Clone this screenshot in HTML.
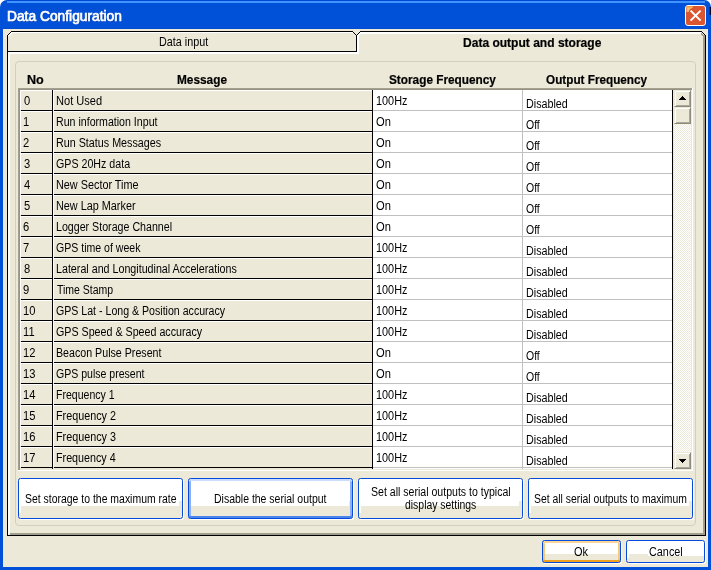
<!DOCTYPE html>
<html lang="en"><head><meta charset="utf-8"><title>Data Configuration</title>
<style>
html,body{margin:0;padding:0}
body{width:711px;height:570px;background:#ECE9D8;position:relative;overflow:hidden;font-family:"Liberation Sans",sans-serif}
#w{position:absolute;left:0;top:0;width:711px;height:570px;background:#ECE9D8;overflow:hidden;will-change:transform}
#w div,#w svg,#w span{position:absolute;display:block}
.t{white-space:nowrap;transform-origin:0 0}
.b{-webkit-text-stroke:0.2px #000}
</style></head>
<body>
<div id="w">
<div style="left:0px;top:0px;width:711px;height:10px;background:#fff;"></div>
<div style="left:0;top:0;width:711px;height:29px;background:linear-gradient(to bottom,#0048D2 0,#0048D2 1px,#0050D8 1px,#0050D8 28px,#004CD2 28px);border-radius:7px 7px 0 0"></div>
<div style="left:7px;top:1px;width:698px;height:2px;background:#3F95FF;"></div>
<div style="left:0px;top:29px;width:3px;height:541px;background:#0050D8;"></div>
<div style="left:708px;top:29px;width:3px;height:541px;background:#0050D8;"></div>
<div style="left:0px;top:567px;width:711px;height:3px;background:#0050D8;"></div>
<div style="left:710px;top:7px;width:1px;height:8px;background:#05051A;"></div>
<div style="left:709px;top:7px;width:1px;height:8px;background:#033A9E;"></div>
<div style="left:685px;top:5px;width:21px;height:21px;box-sizing:border-box;border:1px solid #fff;border-radius:3px;background:#DB5530"></div>
<svg style="left:685px;top:5px" width="21" height="21" viewBox="0 0 21 21"><path d="M5.6 5.6 L15.6 15.6 M15.6 5.6 L5.6 15.6" stroke="#fff" stroke-width="2" stroke-linecap="butt" fill="none"/><path d="M1.5 1.5 h5.5 l1 1 l-3 1.5 l-1.5 3 l-2 0z" fill="#F6BE76"/><path d="M1.5 2 h6.5" stroke="#F2A43A" stroke-width="1" fill="none"/></svg>
<svg style="left:0;top:0" width="711" height="570" viewBox="0 0 711 570" shape-rendering="crispEdges">
<g fill="none" stroke-width="1">
<!-- white highlights -->
<path d="M11 32.5 H353" stroke="#fff"/>
<path d="M8.5 36 L12 32.5" stroke="#fff"/>
<path d="M360 33 H701" stroke="#fff" stroke-width="2"/>
<path d="M358 35 V54" stroke="#fff" stroke-width="2"/>
<path d="M358.5 35 L361 32.5" stroke="#fff"/>
<path d="M8 53 H359" stroke="#fff" stroke-width="2"/>
<path d="M9 52 V534" stroke="#fff" stroke-width="2"/>
<!-- gray shadows -->
<path d="M704 35 V534" stroke="#A09D8D" stroke-width="2"/>
<path d="M701 33 h1 v1 h1 v1 h1 v1 h-2 v-1 h-1 z" fill="#A09D8D" stroke="none"/>
<path d="M10 534 H705" stroke="#A09D8D" stroke-width="2"/>
<!-- black outline -->
<path d="M7.5 535.5 V35.5 L11.5 31.5 H352.5 L356.5 35.5 L360.5 31.5 H701.5 L705.5 35.5 V535.5 Z" stroke="#000"/>
<path d="M7.5 51.5 H356.5 V35" stroke="#000"/>
</g>
</svg>
<div style="left:15px;top:61px;width:681px;height:465px;box-sizing:border-box;border:1px solid #D0D0BF;border-radius:4px"></div>
<div style="left:18px;top:88px;width:675px;height:383px;background:#ECE9D8;"></div>
<div style="left:18px;top:88px;width:675px;height:1px;background:#A3A090;"></div>
<div style="left:18px;top:88px;width:1px;height:383px;background:#A3A090;"></div>
<div style="left:19px;top:89px;width:673px;height:1px;background:#969382;"></div>
<div style="left:19px;top:89px;width:1px;height:381px;background:#969382;"></div>
<div style="left:692px;top:88px;width:1px;height:383px;background:#FFFFFF;"></div>
<div style="left:18px;top:470px;width:675px;height:1px;background:#FFFFFF;"></div>
<div style="left:373px;top:90px;width:299px;height:379px;background:#fff;"></div>
<div style="left:20px;top:90px;width:32px;height:1px;background:#fff;"></div>
<div style="left:20px;top:90px;width:1px;height:20px;background:#fff;"></div>
<div style="left:53px;top:90px;width:319px;height:1px;background:#fff;"></div>
<div style="left:53px;top:90px;width:1px;height:20px;background:#fff;"></div>
<div style="left:21px;top:110px;width:32px;height:1px;background:#000;"></div>
<div style="left:54px;top:110px;width:319px;height:1px;background:#000;"></div>
<div style="left:373px;top:110px;width:299px;height:1px;background:#C0C0C0;"></div>
<div style="left:20px;top:111px;width:32px;height:1px;background:#fff;"></div>
<div style="left:20px;top:111px;width:1px;height:20px;background:#fff;"></div>
<div style="left:53px;top:111px;width:319px;height:1px;background:#fff;"></div>
<div style="left:53px;top:111px;width:1px;height:20px;background:#fff;"></div>
<div style="left:21px;top:131px;width:32px;height:1px;background:#000;"></div>
<div style="left:54px;top:131px;width:319px;height:1px;background:#000;"></div>
<div style="left:373px;top:131px;width:299px;height:1px;background:#C0C0C0;"></div>
<div style="left:20px;top:132px;width:32px;height:1px;background:#fff;"></div>
<div style="left:20px;top:132px;width:1px;height:20px;background:#fff;"></div>
<div style="left:53px;top:132px;width:319px;height:1px;background:#fff;"></div>
<div style="left:53px;top:132px;width:1px;height:20px;background:#fff;"></div>
<div style="left:21px;top:152px;width:32px;height:1px;background:#000;"></div>
<div style="left:54px;top:152px;width:319px;height:1px;background:#000;"></div>
<div style="left:373px;top:152px;width:299px;height:1px;background:#C0C0C0;"></div>
<div style="left:20px;top:153px;width:32px;height:1px;background:#fff;"></div>
<div style="left:20px;top:153px;width:1px;height:20px;background:#fff;"></div>
<div style="left:53px;top:153px;width:319px;height:1px;background:#fff;"></div>
<div style="left:53px;top:153px;width:1px;height:20px;background:#fff;"></div>
<div style="left:21px;top:173px;width:32px;height:1px;background:#000;"></div>
<div style="left:54px;top:173px;width:319px;height:1px;background:#000;"></div>
<div style="left:373px;top:173px;width:299px;height:1px;background:#C0C0C0;"></div>
<div style="left:20px;top:174px;width:32px;height:1px;background:#fff;"></div>
<div style="left:20px;top:174px;width:1px;height:20px;background:#fff;"></div>
<div style="left:53px;top:174px;width:319px;height:1px;background:#fff;"></div>
<div style="left:53px;top:174px;width:1px;height:20px;background:#fff;"></div>
<div style="left:21px;top:194px;width:32px;height:1px;background:#000;"></div>
<div style="left:54px;top:194px;width:319px;height:1px;background:#000;"></div>
<div style="left:373px;top:194px;width:299px;height:1px;background:#C0C0C0;"></div>
<div style="left:20px;top:195px;width:32px;height:1px;background:#fff;"></div>
<div style="left:20px;top:195px;width:1px;height:20px;background:#fff;"></div>
<div style="left:53px;top:195px;width:319px;height:1px;background:#fff;"></div>
<div style="left:53px;top:195px;width:1px;height:20px;background:#fff;"></div>
<div style="left:21px;top:215px;width:32px;height:1px;background:#000;"></div>
<div style="left:54px;top:215px;width:319px;height:1px;background:#000;"></div>
<div style="left:373px;top:215px;width:299px;height:1px;background:#C0C0C0;"></div>
<div style="left:20px;top:216px;width:32px;height:1px;background:#fff;"></div>
<div style="left:20px;top:216px;width:1px;height:20px;background:#fff;"></div>
<div style="left:53px;top:216px;width:319px;height:1px;background:#fff;"></div>
<div style="left:53px;top:216px;width:1px;height:20px;background:#fff;"></div>
<div style="left:21px;top:236px;width:32px;height:1px;background:#000;"></div>
<div style="left:54px;top:236px;width:319px;height:1px;background:#000;"></div>
<div style="left:373px;top:236px;width:299px;height:1px;background:#C0C0C0;"></div>
<div style="left:20px;top:237px;width:32px;height:1px;background:#fff;"></div>
<div style="left:20px;top:237px;width:1px;height:20px;background:#fff;"></div>
<div style="left:53px;top:237px;width:319px;height:1px;background:#fff;"></div>
<div style="left:53px;top:237px;width:1px;height:20px;background:#fff;"></div>
<div style="left:21px;top:257px;width:32px;height:1px;background:#000;"></div>
<div style="left:54px;top:257px;width:319px;height:1px;background:#000;"></div>
<div style="left:373px;top:257px;width:299px;height:1px;background:#C0C0C0;"></div>
<div style="left:20px;top:258px;width:32px;height:1px;background:#fff;"></div>
<div style="left:20px;top:258px;width:1px;height:20px;background:#fff;"></div>
<div style="left:53px;top:258px;width:319px;height:1px;background:#fff;"></div>
<div style="left:53px;top:258px;width:1px;height:20px;background:#fff;"></div>
<div style="left:21px;top:278px;width:32px;height:1px;background:#000;"></div>
<div style="left:54px;top:278px;width:319px;height:1px;background:#000;"></div>
<div style="left:373px;top:278px;width:299px;height:1px;background:#C0C0C0;"></div>
<div style="left:20px;top:279px;width:32px;height:1px;background:#fff;"></div>
<div style="left:20px;top:279px;width:1px;height:20px;background:#fff;"></div>
<div style="left:53px;top:279px;width:319px;height:1px;background:#fff;"></div>
<div style="left:53px;top:279px;width:1px;height:20px;background:#fff;"></div>
<div style="left:21px;top:299px;width:32px;height:1px;background:#000;"></div>
<div style="left:54px;top:299px;width:319px;height:1px;background:#000;"></div>
<div style="left:373px;top:299px;width:299px;height:1px;background:#C0C0C0;"></div>
<div style="left:20px;top:300px;width:32px;height:1px;background:#fff;"></div>
<div style="left:20px;top:300px;width:1px;height:20px;background:#fff;"></div>
<div style="left:53px;top:300px;width:319px;height:1px;background:#fff;"></div>
<div style="left:53px;top:300px;width:1px;height:20px;background:#fff;"></div>
<div style="left:21px;top:320px;width:32px;height:1px;background:#000;"></div>
<div style="left:54px;top:320px;width:319px;height:1px;background:#000;"></div>
<div style="left:373px;top:320px;width:299px;height:1px;background:#C0C0C0;"></div>
<div style="left:20px;top:321px;width:32px;height:1px;background:#fff;"></div>
<div style="left:20px;top:321px;width:1px;height:20px;background:#fff;"></div>
<div style="left:53px;top:321px;width:319px;height:1px;background:#fff;"></div>
<div style="left:53px;top:321px;width:1px;height:20px;background:#fff;"></div>
<div style="left:21px;top:341px;width:32px;height:1px;background:#000;"></div>
<div style="left:54px;top:341px;width:319px;height:1px;background:#000;"></div>
<div style="left:373px;top:341px;width:299px;height:1px;background:#C0C0C0;"></div>
<div style="left:20px;top:342px;width:32px;height:1px;background:#fff;"></div>
<div style="left:20px;top:342px;width:1px;height:20px;background:#fff;"></div>
<div style="left:53px;top:342px;width:319px;height:1px;background:#fff;"></div>
<div style="left:53px;top:342px;width:1px;height:20px;background:#fff;"></div>
<div style="left:21px;top:362px;width:32px;height:1px;background:#000;"></div>
<div style="left:54px;top:362px;width:319px;height:1px;background:#000;"></div>
<div style="left:373px;top:362px;width:299px;height:1px;background:#C0C0C0;"></div>
<div style="left:20px;top:363px;width:32px;height:1px;background:#fff;"></div>
<div style="left:20px;top:363px;width:1px;height:20px;background:#fff;"></div>
<div style="left:53px;top:363px;width:319px;height:1px;background:#fff;"></div>
<div style="left:53px;top:363px;width:1px;height:20px;background:#fff;"></div>
<div style="left:21px;top:383px;width:32px;height:1px;background:#000;"></div>
<div style="left:54px;top:383px;width:319px;height:1px;background:#000;"></div>
<div style="left:373px;top:383px;width:299px;height:1px;background:#C0C0C0;"></div>
<div style="left:20px;top:384px;width:32px;height:1px;background:#fff;"></div>
<div style="left:20px;top:384px;width:1px;height:20px;background:#fff;"></div>
<div style="left:53px;top:384px;width:319px;height:1px;background:#fff;"></div>
<div style="left:53px;top:384px;width:1px;height:20px;background:#fff;"></div>
<div style="left:21px;top:404px;width:32px;height:1px;background:#000;"></div>
<div style="left:54px;top:404px;width:319px;height:1px;background:#000;"></div>
<div style="left:373px;top:404px;width:299px;height:1px;background:#C0C0C0;"></div>
<div style="left:20px;top:405px;width:32px;height:1px;background:#fff;"></div>
<div style="left:20px;top:405px;width:1px;height:20px;background:#fff;"></div>
<div style="left:53px;top:405px;width:319px;height:1px;background:#fff;"></div>
<div style="left:53px;top:405px;width:1px;height:20px;background:#fff;"></div>
<div style="left:21px;top:425px;width:32px;height:1px;background:#000;"></div>
<div style="left:54px;top:425px;width:319px;height:1px;background:#000;"></div>
<div style="left:373px;top:425px;width:299px;height:1px;background:#C0C0C0;"></div>
<div style="left:20px;top:426px;width:32px;height:1px;background:#fff;"></div>
<div style="left:20px;top:426px;width:1px;height:20px;background:#fff;"></div>
<div style="left:53px;top:426px;width:319px;height:1px;background:#fff;"></div>
<div style="left:53px;top:426px;width:1px;height:20px;background:#fff;"></div>
<div style="left:21px;top:446px;width:32px;height:1px;background:#000;"></div>
<div style="left:54px;top:446px;width:319px;height:1px;background:#000;"></div>
<div style="left:373px;top:446px;width:299px;height:1px;background:#C0C0C0;"></div>
<div style="left:20px;top:447px;width:32px;height:1px;background:#fff;"></div>
<div style="left:20px;top:447px;width:1px;height:20px;background:#fff;"></div>
<div style="left:53px;top:447px;width:319px;height:1px;background:#fff;"></div>
<div style="left:53px;top:447px;width:1px;height:20px;background:#fff;"></div>
<div style="left:21px;top:467px;width:32px;height:1px;background:#000;"></div>
<div style="left:54px;top:467px;width:319px;height:1px;background:#000;"></div>
<div style="left:373px;top:467px;width:299px;height:1px;background:#C0C0C0;"></div>
<div style="left:52px;top:90px;width:1px;height:379px;background:#000;"></div>
<div style="left:372px;top:90px;width:1px;height:379px;background:#000;"></div>
<div style="left:522px;top:90px;width:1px;height:379px;background:#C0C0C0;"></div>
<div style="left:672px;top:90px;width:1px;height:379px;background:#000;"></div>
<div style="left:674px;top:90px;width:17px;height:379px;background-color:#F5F4EB;background-image:repeating-conic-gradient(#fff 0% 25%, #ECE9D8 0% 50%);background-size:2px 2px"></div>
<div style="left:674px;top:90px;width:17px;height:17px;box-sizing:border-box;background:#ECE9D8;border:1px solid;border-color:#ECE9D8 #8E8B7C #8E8B7C #ECE9D8;box-shadow:inset 1px 1px 0 #fff, inset -1px -1px 0 #ACA899"></div>
<div style="left:674px;top:107px;width:17px;height:17px;box-sizing:border-box;background:#ECE9D8;border:1px solid;border-color:#ECE9D8 #8E8B7C #8E8B7C #ECE9D8;box-shadow:inset 1px 1px 0 #fff, inset -1px -1px 0 #ACA899"></div>
<div style="left:674px;top:452px;width:17px;height:17px;box-sizing:border-box;background:#ECE9D8;border:1px solid;border-color:#ECE9D8 #8E8B7C #8E8B7C #ECE9D8;box-shadow:inset 1px 1px 0 #fff, inset -1px -1px 0 #ACA899"></div>
<svg style="left:674px;top:90px" width="17" height="379" shape-rendering="crispEdges"><path d="M4.5 10 L8.5 6 L12.5 10 Z" fill="#000"/><path d="M4.5 369 L8.5 373 L12.5 369 Z" fill="#000"/></svg>
<div style="left:18px;top:478px;width:165px;height:41px;box-sizing:border-box;border:1px solid #064ADC;border-radius:2.5px;background:linear-gradient(to bottom,#fff 0,#fff 34px,transparent 34px) 0 0/2px 100% no-repeat,linear-gradient(to bottom,transparent 22px,#ECE9D8 22px) 100% 0/3px 100% no-repeat,linear-gradient(to bottom,#fff 0,#fff 27px,#ECE9D8 27px,#ECE9D8 100%);box-shadow:1px 1px 0 #fff;"></div>
<div style="left:188px;top:478px;width:165px;height:41px;box-sizing:border-box;border:1px solid #064ADC;border-radius:2.5px;background:linear-gradient(to bottom,#fff 0,#fff 34px,transparent 34px) 0 0/2px 100% no-repeat,linear-gradient(to bottom,transparent 22px,#ECE9D8 22px) 100% 0/3px 100% no-repeat,linear-gradient(to bottom,#fff 0,#fff 27px,#ECE9D8 27px,#ECE9D8 100%);box-shadow:inset 0 2px 0 #CBDDFD, inset 0 -2px 0 #4B84EC, inset 2px 0 0 #8DB1F4, inset -2px 0 0 #8DB1F4, 1px 1px 0 #fff;"></div>
<div style="left:358px;top:478px;width:165px;height:41px;box-sizing:border-box;border:1px solid #064ADC;border-radius:2.5px;background:linear-gradient(to bottom,#fff 0,#fff 34px,transparent 34px) 0 0/2px 100% no-repeat,linear-gradient(to bottom,transparent 22px,#ECE9D8 22px) 100% 0/3px 100% no-repeat,linear-gradient(to bottom,#fff 0,#fff 27px,#ECE9D8 27px,#ECE9D8 100%);box-shadow:1px 1px 0 #fff;"></div>
<div style="left:528px;top:478px;width:165px;height:41px;box-sizing:border-box;border:1px solid #064ADC;border-radius:2.5px;background:linear-gradient(to bottom,#fff 0,#fff 34px,transparent 34px) 0 0/2px 100% no-repeat,linear-gradient(to bottom,transparent 22px,#ECE9D8 22px) 100% 0/3px 100% no-repeat,linear-gradient(to bottom,#fff 0,#fff 27px,#ECE9D8 27px,#ECE9D8 100%);box-shadow:1px 1px 0 #fff;"></div>
<div style="left:542px;top:540px;width:79px;height:23px;box-sizing:border-box;border:1px solid #064ADC;border-radius:2.5px;background:linear-gradient(to bottom,#fff 0,#fff 15px,transparent 15px) 0 0/2px 100% no-repeat,linear-gradient(to bottom,transparent 13px,#ECE9D8 13px) 100% 0/3px 100% no-repeat,linear-gradient(to bottom,#fff 0,#fff 13px,#ECE9D8 13px,#ECE9D8 100%);box-shadow:inset 0 2px 0 #FBD69A, inset 0 -2px 0 #F0A020, inset 2px 0 0 #F7C878, inset -2px 0 0 #F7C878, 1px 1px 0 #fff;"></div>
<div style="left:626px;top:540px;width:79px;height:23px;box-sizing:border-box;border:1px solid #064ADC;border-radius:2.5px;background:linear-gradient(to bottom,#fff 0,#fff 17px,transparent 17px) 0 0/2px 100% no-repeat,linear-gradient(to bottom,transparent 15px,#ECE9D8 15px) 100% 0/3px 100% no-repeat,linear-gradient(to bottom,#fff 0,#fff 15px,#ECE9D8 15px,#ECE9D8 100%);box-shadow:1px 1px 0 #fff;"></div>
<div style="left:629px;top:554px;width:19px;height:2px;background:#ECE9D8;"></div>
<span class="t" style="left:159.10px;top:36.00px;font-size:12px;line-height:12px;font-weight:normal;color:#000;transform:scaleX(0.8988);">Data input</span>
<span class="t b" style="left:462.65px;top:37.00px;font-size:12px;line-height:12px;font-weight:bold;color:#000;transform:scaleX(1.0024);">Data output and storage</span>
<span class="t b" style="left:27.21px;top:74.00px;font-size:12px;line-height:12px;font-weight:bold;color:#000;transform:scaleX(1.0508);">No</span>
<span class="t b" style="left:177.26px;top:74.00px;font-size:12px;line-height:12px;font-weight:bold;color:#000;transform:scaleX(0.9859);">Message</span>
<span class="t b" style="left:389.23px;top:74.00px;font-size:12px;line-height:12px;font-weight:bold;color:#000;transform:scaleX(0.9838);">Storage Frequency</span>
<span class="t b" style="left:545.61px;top:74.00px;font-size:12px;line-height:12px;font-weight:bold;color:#000;transform:scaleX(0.9781);">Output Frequency</span>
<span class="t" style="left:23.54px;top:95.00px;font-size:12px;line-height:12px;font-weight:normal;color:#000;transform:scaleX(0.9300);">0</span>
<span class="t" style="left:56.08px;top:95.00px;font-size:12px;line-height:12px;font-weight:normal;color:#000;transform:scaleX(0.9223);">Not Used</span>
<span class="t" style="left:376.31px;top:95.00px;font-size:12px;line-height:12px;font-weight:normal;color:#000;transform:scaleX(0.9053);">100Hz</span>
<span class="t" style="left:526.00px;top:98.00px;font-size:12px;line-height:12px;font-weight:normal;color:#000;transform:scaleX(0.8958);">Disabled</span>
<span class="t" style="left:23.19px;top:116.00px;font-size:12px;line-height:12px;font-weight:normal;color:#000;transform:scaleX(0.9300);">1</span>
<span class="t" style="left:56.12px;top:116.00px;font-size:12px;line-height:12px;font-weight:normal;color:#000;transform:scaleX(0.8845);">Run information Input</span>
<span class="t" style="left:375.82px;top:116.00px;font-size:12px;line-height:12px;font-weight:normal;color:#000;transform:scaleX(0.9299);">On</span>
<span class="t" style="left:526.15px;top:119.00px;font-size:12px;line-height:12px;font-weight:normal;color:#000;transform:scaleX(0.8727);">Off</span>
<span class="t" style="left:23.42px;top:137.00px;font-size:12px;line-height:12px;font-weight:normal;color:#000;transform:scaleX(0.9300);">2</span>
<span class="t" style="left:56.10px;top:137.00px;font-size:12px;line-height:12px;font-weight:normal;color:#000;transform:scaleX(0.8957);">Run Status Messages</span>
<span class="t" style="left:375.82px;top:137.00px;font-size:12px;line-height:12px;font-weight:normal;color:#000;transform:scaleX(0.9299);">On</span>
<span class="t" style="left:526.15px;top:140.00px;font-size:12px;line-height:12px;font-weight:normal;color:#000;transform:scaleX(0.8727);">Off</span>
<span class="t" style="left:23.54px;top:158.00px;font-size:12px;line-height:12px;font-weight:normal;color:#000;transform:scaleX(0.9300);">3</span>
<span class="t" style="left:56.44px;top:158.00px;font-size:12px;line-height:12px;font-weight:normal;color:#000;transform:scaleX(0.8882);">GPS 20Hz data</span>
<span class="t" style="left:375.82px;top:158.00px;font-size:12px;line-height:12px;font-weight:normal;color:#000;transform:scaleX(0.9299);">On</span>
<span class="t" style="left:526.15px;top:161.00px;font-size:12px;line-height:12px;font-weight:normal;color:#000;transform:scaleX(0.8727);">Off</span>
<span class="t" style="left:23.77px;top:179.00px;font-size:12px;line-height:12px;font-weight:normal;color:#000;transform:scaleX(0.9300);">4</span>
<span class="t" style="left:56.10px;top:179.00px;font-size:12px;line-height:12px;font-weight:normal;color:#000;transform:scaleX(0.9035);">New Sector Time</span>
<span class="t" style="left:375.82px;top:179.00px;font-size:12px;line-height:12px;font-weight:normal;color:#000;transform:scaleX(0.9299);">On</span>
<span class="t" style="left:526.15px;top:182.00px;font-size:12px;line-height:12px;font-weight:normal;color:#000;transform:scaleX(0.8727);">Off</span>
<span class="t" style="left:23.54px;top:200.00px;font-size:12px;line-height:12px;font-weight:normal;color:#000;transform:scaleX(0.9300);">5</span>
<span class="t" style="left:56.10px;top:200.00px;font-size:12px;line-height:12px;font-weight:normal;color:#000;transform:scaleX(0.9036);">New Lap Marker</span>
<span class="t" style="left:375.82px;top:200.00px;font-size:12px;line-height:12px;font-weight:normal;color:#000;transform:scaleX(0.9299);">On</span>
<span class="t" style="left:526.15px;top:203.00px;font-size:12px;line-height:12px;font-weight:normal;color:#000;transform:scaleX(0.8727);">Off</span>
<span class="t" style="left:23.42px;top:221.00px;font-size:12px;line-height:12px;font-weight:normal;color:#000;transform:scaleX(0.9300);">6</span>
<span class="t" style="left:56.11px;top:221.00px;font-size:12px;line-height:12px;font-weight:normal;color:#000;transform:scaleX(0.8876);">Logger Storage Channel</span>
<span class="t" style="left:375.82px;top:221.00px;font-size:12px;line-height:12px;font-weight:normal;color:#000;transform:scaleX(0.9299);">On</span>
<span class="t" style="left:526.15px;top:224.00px;font-size:12px;line-height:12px;font-weight:normal;color:#000;transform:scaleX(0.8727);">Off</span>
<span class="t" style="left:23.42px;top:242.00px;font-size:12px;line-height:12px;font-weight:normal;color:#000;transform:scaleX(0.9300);">7</span>
<span class="t" style="left:56.45px;top:242.00px;font-size:12px;line-height:12px;font-weight:normal;color:#000;transform:scaleX(0.8797);">GPS time of week</span>
<span class="t" style="left:376.31px;top:242.00px;font-size:12px;line-height:12px;font-weight:normal;color:#000;transform:scaleX(0.9053);">100Hz</span>
<span class="t" style="left:526.00px;top:245.00px;font-size:12px;line-height:12px;font-weight:normal;color:#000;transform:scaleX(0.8958);">Disabled</span>
<span class="t" style="left:23.54px;top:263.00px;font-size:12px;line-height:12px;font-weight:normal;color:#000;transform:scaleX(0.9300);">8</span>
<span class="t" style="left:56.11px;top:263.00px;font-size:12px;line-height:12px;font-weight:normal;color:#000;transform:scaleX(0.8914);">Lateral and Longitudinal Accelerations</span>
<span class="t" style="left:376.31px;top:263.00px;font-size:12px;line-height:12px;font-weight:normal;color:#000;transform:scaleX(0.9053);">100Hz</span>
<span class="t" style="left:526.00px;top:266.00px;font-size:12px;line-height:12px;font-weight:normal;color:#000;transform:scaleX(0.8958);">Disabled</span>
<span class="t" style="left:23.42px;top:284.00px;font-size:12px;line-height:12px;font-weight:normal;color:#000;transform:scaleX(0.9300);">9</span>
<span class="t" style="left:56.78px;top:284.00px;font-size:12px;line-height:12px;font-weight:normal;color:#000;transform:scaleX(0.8740);">Time Stamp</span>
<span class="t" style="left:376.31px;top:284.00px;font-size:12px;line-height:12px;font-weight:normal;color:#000;transform:scaleX(0.9053);">100Hz</span>
<span class="t" style="left:526.00px;top:287.00px;font-size:12px;line-height:12px;font-weight:normal;color:#000;transform:scaleX(0.8958);">Disabled</span>
<span class="t" style="left:23.19px;top:305.00px;font-size:12px;line-height:12px;font-weight:normal;color:#000;transform:scaleX(0.9300);">10</span>
<span class="t" style="left:56.45px;top:305.00px;font-size:12px;line-height:12px;font-weight:normal;color:#000;transform:scaleX(0.8834);">GPS Lat - Long &amp; Position accuracy</span>
<span class="t" style="left:376.31px;top:305.00px;font-size:12px;line-height:12px;font-weight:normal;color:#000;transform:scaleX(0.9053);">100Hz</span>
<span class="t" style="left:526.00px;top:308.00px;font-size:12px;line-height:12px;font-weight:normal;color:#000;transform:scaleX(0.8958);">Disabled</span>
<span class="t" style="left:23.19px;top:326.00px;font-size:12px;line-height:12px;font-weight:normal;color:#000;transform:scaleX(0.9300);">11</span>
<span class="t" style="left:56.44px;top:326.00px;font-size:12px;line-height:12px;font-weight:normal;color:#000;transform:scaleX(0.8906);">GPS Speed &amp; Speed accuracy</span>
<span class="t" style="left:376.31px;top:326.00px;font-size:12px;line-height:12px;font-weight:normal;color:#000;transform:scaleX(0.9053);">100Hz</span>
<span class="t" style="left:526.00px;top:329.00px;font-size:12px;line-height:12px;font-weight:normal;color:#000;transform:scaleX(0.8958);">Disabled</span>
<span class="t" style="left:23.19px;top:347.00px;font-size:12px;line-height:12px;font-weight:normal;color:#000;transform:scaleX(0.9300);">12</span>
<span class="t" style="left:56.11px;top:347.00px;font-size:12px;line-height:12px;font-weight:normal;color:#000;transform:scaleX(0.8884);">Beacon Pulse Present</span>
<span class="t" style="left:375.82px;top:347.00px;font-size:12px;line-height:12px;font-weight:normal;color:#000;transform:scaleX(0.9299);">On</span>
<span class="t" style="left:526.15px;top:350.00px;font-size:12px;line-height:12px;font-weight:normal;color:#000;transform:scaleX(0.8727);">Off</span>
<span class="t" style="left:23.19px;top:368.00px;font-size:12px;line-height:12px;font-weight:normal;color:#000;transform:scaleX(0.9300);">13</span>
<span class="t" style="left:56.45px;top:368.00px;font-size:12px;line-height:12px;font-weight:normal;color:#000;transform:scaleX(0.8790);">GPS pulse present</span>
<span class="t" style="left:375.82px;top:368.00px;font-size:12px;line-height:12px;font-weight:normal;color:#000;transform:scaleX(0.9299);">On</span>
<span class="t" style="left:526.15px;top:371.00px;font-size:12px;line-height:12px;font-weight:normal;color:#000;transform:scaleX(0.8727);">Off</span>
<span class="t" style="left:23.19px;top:389.00px;font-size:12px;line-height:12px;font-weight:normal;color:#000;transform:scaleX(0.9300);">14</span>
<span class="t" style="left:56.12px;top:389.00px;font-size:12px;line-height:12px;font-weight:normal;color:#000;transform:scaleX(0.8783);">Frequency 1</span>
<span class="t" style="left:376.31px;top:389.00px;font-size:12px;line-height:12px;font-weight:normal;color:#000;transform:scaleX(0.9053);">100Hz</span>
<span class="t" style="left:526.00px;top:392.00px;font-size:12px;line-height:12px;font-weight:normal;color:#000;transform:scaleX(0.8958);">Disabled</span>
<span class="t" style="left:23.19px;top:410.00px;font-size:12px;line-height:12px;font-weight:normal;color:#000;transform:scaleX(0.9300);">15</span>
<span class="t" style="left:56.10px;top:410.00px;font-size:12px;line-height:12px;font-weight:normal;color:#000;transform:scaleX(0.8983);">Frequency 2</span>
<span class="t" style="left:376.31px;top:410.00px;font-size:12px;line-height:12px;font-weight:normal;color:#000;transform:scaleX(0.9053);">100Hz</span>
<span class="t" style="left:526.00px;top:413.00px;font-size:12px;line-height:12px;font-weight:normal;color:#000;transform:scaleX(0.8958);">Disabled</span>
<span class="t" style="left:23.19px;top:431.00px;font-size:12px;line-height:12px;font-weight:normal;color:#000;transform:scaleX(0.9300);">16</span>
<span class="t" style="left:56.10px;top:431.00px;font-size:12px;line-height:12px;font-weight:normal;color:#000;transform:scaleX(0.8983);">Frequency 3</span>
<span class="t" style="left:376.31px;top:431.00px;font-size:12px;line-height:12px;font-weight:normal;color:#000;transform:scaleX(0.9053);">100Hz</span>
<span class="t" style="left:526.00px;top:434.00px;font-size:12px;line-height:12px;font-weight:normal;color:#000;transform:scaleX(0.8958);">Disabled</span>
<span class="t" style="left:23.19px;top:452.00px;font-size:12px;line-height:12px;font-weight:normal;color:#000;transform:scaleX(0.9300);">17</span>
<span class="t" style="left:56.11px;top:452.00px;font-size:12px;line-height:12px;font-weight:normal;color:#000;transform:scaleX(0.8948);">Frequency 4</span>
<span class="t" style="left:376.31px;top:452.00px;font-size:12px;line-height:12px;font-weight:normal;color:#000;transform:scaleX(0.9053);">100Hz</span>
<span class="t" style="left:526.00px;top:455.00px;font-size:12px;line-height:12px;font-weight:normal;color:#000;transform:scaleX(0.8958);">Disabled</span>
<span class="t" style="left:24.96px;top:493.00px;font-size:12px;line-height:12px;font-weight:normal;color:#000;transform:scaleX(0.8706);">Set storage to the maximum rate</span>
<span class="t" style="left:213.63px;top:493.00px;font-size:12px;line-height:12px;font-weight:normal;color:#000;transform:scaleX(0.8737);">Disable the serial output</span>
<span class="t" style="left:370.95px;top:486.00px;font-size:12px;line-height:12px;font-weight:normal;color:#000;transform:scaleX(0.8801);">Set all serial outputs to typical</span>
<span class="t" style="left:405.07px;top:499.00px;font-size:12px;line-height:12px;font-weight:normal;color:#000;transform:scaleX(0.8690);">display settings</span>
<span class="t" style="left:533.76px;top:493.00px;font-size:12px;line-height:12px;font-weight:normal;color:#000;transform:scaleX(0.8650);">Set all serial outputs to maximum</span>
<span class="t" style="left:573.93px;top:546.00px;font-size:12px;line-height:12px;font-weight:normal;color:#000;transform:scaleX(0.9153);">Ok</span>
<span class="t" style="left:649.24px;top:546.00px;font-size:12px;line-height:12px;font-weight:normal;color:#000;transform:scaleX(0.9031);">Cancel</span>
<span class="t" style="left:7.19px;top:9.00px;font-size:14px;line-height:14px;font-weight:normal;color:#fff;transform:scaleX(0.9847);-webkit-text-stroke:0.7px #fff;text-shadow:1px 1px 0 rgba(0,20,110,.3);">Data Configuration</span>
</div>
</body></html>
